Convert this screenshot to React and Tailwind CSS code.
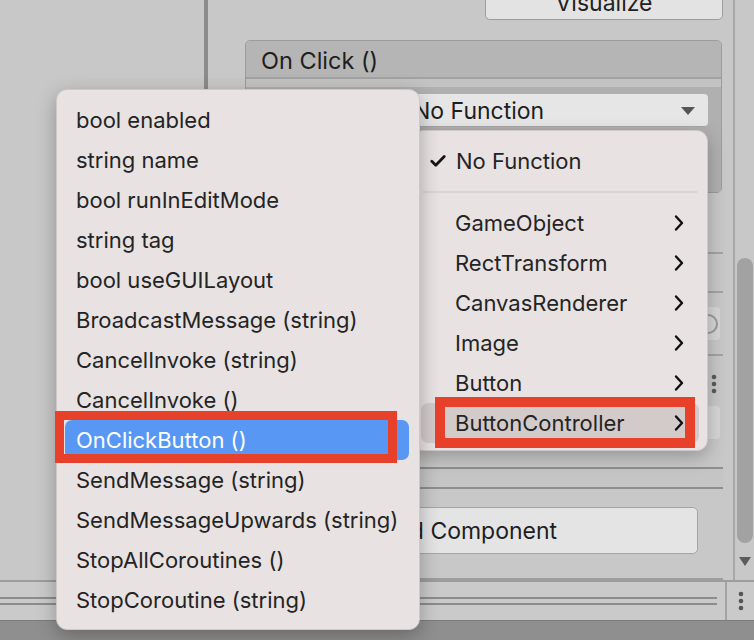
import React from 'react';

const leftItems = [
  'bool enabled',
  'string name',
  'bool runInEditMode',
  'string tag',
  'bool useGUILayout',
  'BroadcastMessage (string)',
  'CancelInvoke (string)',
  'CancelInvoke ()',
  'OnClickButton ()',
  'SendMessage (string)',
  'SendMessageUpwards (string)',
  'StopAllCoroutines ()',
  'StopCoroutine (string)',
];

const rightItems = ['GameObject', 'RectTransform', 'CanvasRenderer', 'Image', 'Button', 'ButtonController'];

function Chevron() {
  return (
    <svg width="12" height="18" viewBox="0 0 12 18" className="shrink-0">
      <path d="M3 2.5 L9 9 L3 15.5" fill="none" stroke="#111" strokeWidth="2.4" strokeLinecap="round" strokeLinejoin="round" />
    </svg>
  );
}

function Check() {
  return (
    <svg width="16" height="12" viewBox="0 0 16 12" className="shrink-0">
      <path d="M1.8 6.2 L5.8 10.2 L14.2 1.6" fill="none" stroke="#151515" strokeWidth="2.8" strokeLinecap="round" strokeLinejoin="round" />
    </svg>
  );
}

function Dots({ color = '#555' }) {
  return (
    <svg width="6" height="20" viewBox="0 0 6 20">
      <circle cx="3" cy="3" r="2.3" fill={color} />
      <circle cx="3" cy="10" r="2.3" fill={color} />
      <circle cx="3" cy="17" r="2.3" fill={color} />
    </svg>
  );
}

export default function App() {
  return (
    <div className="relative w-[754px] h-[640px] overflow-hidden bg-[#c8c8c8] font-['Inter','Liberation_Sans',sans-serif] text-[#1c1c1c]">
      {/* editor background */}
      <div className="flex flex-col h-full">
        <div className="flex h-[580px]">
          {/* hierarchy panel */}
          <div className="w-[204px] bg-[#c8c8c8]" />
          <div className="w-[4px] bg-[#8b8b8b]" />

          {/* inspector */}
          <div className="flex-1 flex flex-col pr-[10px]">
            <div className="h-[20px] flex justify-end overflow-hidden">
              <div className="w-[238px] h-[33px] -mt-[13px] shrink-0 rounded-[5px] border border-[#9c9c9c] bg-[#e3e3e3] flex items-center justify-center text-[23px] text-[#222]">
                Visualize
              </div>
            </div>

            {/* On Click event box */}
            <div className="mt-[20px] ml-[37px] mr-[1px] h-[153px] flex flex-col rounded-[5px] border border-[#9c9c9c] overflow-hidden">
              <div className="h-[38px] bg-[#b5b5b5] border-b-2 border-[#a2a2a2] flex items-center pl-[15px] pt-[3px] text-[23.5px] text-[#1e1e1e]">
                On Click ()
              </div>
              <div className="h-[8px] bg-[#c3c3c3]" />
              <div className="flex-1 bg-[#b0b0b0] pt-[7px] pr-[13px] pl-[16px]">
                <div className="flex gap-[10px]">
                  <div className="w-[134px] h-[33px] rounded-[4px] bg-[#e5e5e5]" />
                  <div className="flex-1 h-[33px] rounded-[4px] bg-[#e6e6e6] border-b border-[#a8a8a8] flex items-center justify-between pl-[7px] pr-[12px] pt-[2px] text-[23px] text-[#1e1e1e]">
                    <span>No Function</span>
                    <svg width="16" height="10" viewBox="0 0 16 10"><path d="M1 1 H15 L8 9 Z" fill="#555" /></svg>
                  </div>
                </div>
              </div>
            </div>

            {/* components list below */}
            <div className="h-[59px]" />
            <div className="h-[41px] border-t-2 border-b-2 border-[#a3a3a3] flex items-center justify-end pr-[20px]">
              <Dots color="#9a9a9a" />
            </div>
            <div className="h-[63px] border-b-2 border-[#a3a3a3] flex items-center justify-end pr-[3px]">
              <div className="w-[60px] h-[33px] rounded-[4px] bg-[#d6d6d6] flex items-center justify-end pr-[2px]">
                <div className="w-[20px] h-[20px] rounded-full border-2 border-[#999]" />
              </div>
            </div>
            <div className="h-[111px] flex flex-col items-end pr-[3px] pt-[18px]">
              <div className="pr-[3px]"><Dots color="#5a5a5a" /></div>
              <div className="mt-[12px] w-[60px] h-[33px] rounded-[4px] bg-[#d6d6d6]" />
            </div>
            <div className="h-[22px] border-t-2 border-b-2 border-[#8e8e8e] bg-[#c5c5c5]" />
            <div className="flex-1 flex justify-end pr-[25px] pt-[18px] border-b-2 border-[#9e9e9e]">
              <div className="w-[447px] h-[47px] rounded-[5px] border border-[#a5a5a5] bg-[#e4e4e4] flex items-center justify-center pt-[1px] pr-[12px] text-[23px] text-[#1e1e1e]">
                Add Component
              </div>
            </div>
          </div>

          {/* scrollbar */}
          <div className="w-[21px] border-l-2 border-[#a8a8a8] flex flex-col items-center pt-[258px] bg-[#c8c8c8]">
            <div className="w-[16px] h-[285px] rounded-full bg-[#a2a2a2]" />
            <svg width="12" height="9" viewBox="0 0 12 9" className="mt-[14px]"><path d="M0 0 H12 L6 9 Z" fill="#5c5c5c" /></svg>
          </div>
        </div>

        {/* bottom toolbar */}
        <div className="h-[40px] border-t-2 border-[#9c9c9c] bg-[#cacaca] flex">
          <div className="flex-1 flex flex-col justify-center gap-[4px] pr-[8px]">
            <div className="h-[2px] bg-[#8c8c8c]" />
            <div className="h-[2px] bg-[#8c8c8c]" />
          </div>
          <div className="w-[29px] border-l-2 border-[#a3a3a3] flex items-center justify-center">
            <Dots color="#555" />
          </div>
        </div>
        <div className="flex-1 bg-[#8f8f8f] border-t border-[#7c7c7c]" />
      </div>

      {/* component function menu */}
      <div className="absolute left-[412px] top-[130px] w-[296px] rounded-[11px] bg-[#e8e2e2] border border-[#cfc8c8] shadow-[0_6px_18px_rgba(0,0,0,0.25)] pt-[10px] pb-[7px] px-[8px] text-[22px] text-[#242424]">
        <div className="h-[40px] flex items-center pl-[9px] gap-[10px]">
          <Check />
          <span>No Function</span>
        </div>
        <div className="h-[22px] flex items-center px-[2px]">
          <div className="w-full h-[2px] bg-[#dad3d3]" />
        </div>
        {rightItems.map((name) => {
          const active = name === 'ButtonController';
          return (
            <div
              key={name}
              className={active
                ? 'relative h-[40px] flex items-center justify-between pl-[34px] pr-[14px] rounded-[7px] bg-[#d3cbca]'
                : 'h-[40px] flex items-center justify-between pl-[34px] pr-[14px]'}
            >
              <span>{name}</span>
              <Chevron />
              {active && (
                <div className="absolute left-[14px] -top-[6px] w-[260px] h-[51px] border-[10px] border-[#e8412b]" />
              )}
            </div>
          );
        })}
      </div>

      {/* method submenu */}
      <div className="absolute left-[56px] top-[89px] w-[364px] rounded-[11px] bg-[#e8e2e2] border border-[#cfc8c8] shadow-[0_6px_20px_rgba(0,0,0,0.28)] pt-[10px] pb-[9px] pl-[8px] pr-[10px] text-[22px] text-[#242424]">
        {leftItems.map((name) => {
          const active = name === 'OnClickButton ()';
          return (
            <div
              key={name}
              className={active
                ? 'relative h-[40px] flex items-center pl-[11px] rounded-[7px] bg-[#5897f4] text-white'
                : 'h-[40px] flex items-center pl-[11px]'}
            >
              <span className="relative">{name}</span>
              {active && (
                <div className="absolute -left-[10px] -top-[9px] w-[342px] h-[52px] border-[9px] border-[#e8412b]" />
              )}
            </div>
          );
        })}
      </div>
    </div>
  );
}
